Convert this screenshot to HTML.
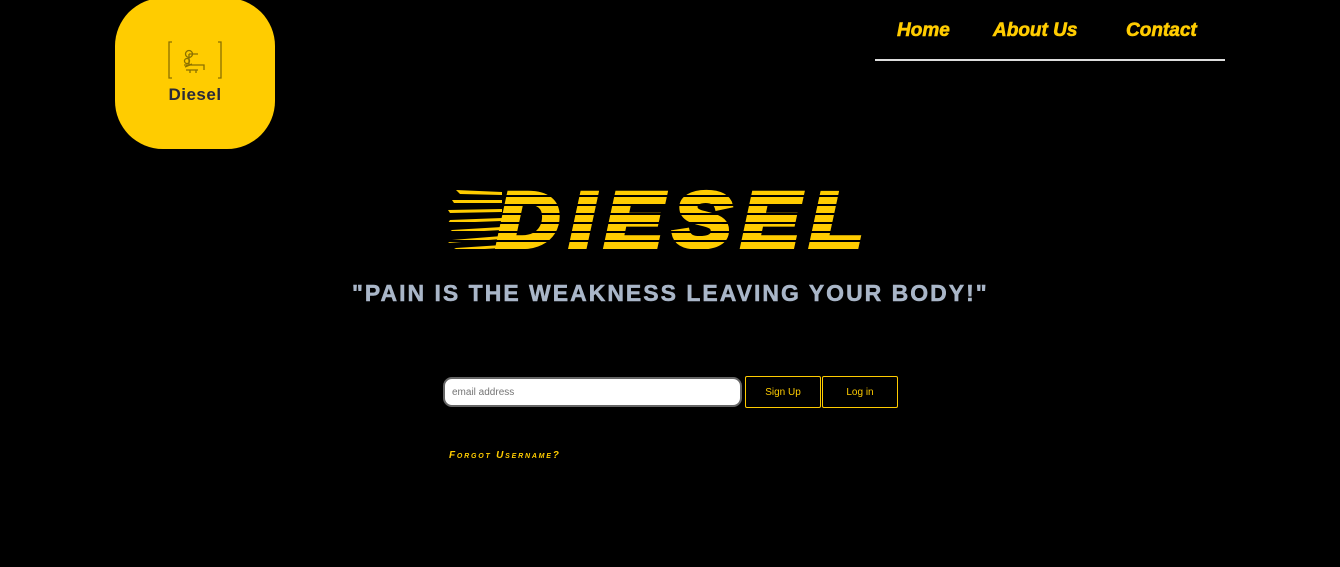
<!DOCTYPE html>
<html><head><style>
body{margin:0;background:#000;width:1340px;height:567px;overflow:hidden;position:relative;font-family:"Liberation Sans",sans-serif}
.logo{position:absolute;left:115px;top:-2px;width:160px;height:151px;background:#ffcc00;border-radius:48px}
.logo .t{position:absolute;left:0;width:160px;top:87px;text-align:center;font-weight:bold;font-size:17px;color:#2a2a3a;letter-spacing:.5px}
nav a{position:absolute;top:20px;color:#ffcc00;font-weight:bold;font-style:italic;font-size:19px;text-decoration:none;font-family:"Liberation Sans",sans-serif;-webkit-text-stroke:0.6px #ffcc00}
.line{position:absolute;left:875px;top:59px;width:350px;height:2px;background:#ddd}
.title{position:absolute;left:497px;top:175px;font-size:86px;font-weight:bold;font-style:italic;color:#ffcc00;letter-spacing:11px;line-height:100px;-webkit-text-stroke:6px #ffcc00;transform:scaleY(0.89);transform-origin:0 13px}
.stripes{position:absolute;left:448px;top:188px;width:430px;height:66px;background:repeating-linear-gradient(to bottom,transparent 0 7px,#000 7px 9px)}
.quote{position:absolute;left:352px;top:279px;white-space:nowrap;font-size:23px;font-weight:bold;color:#a9b6c8;letter-spacing:2px;line-height:28px;-webkit-text-stroke:0.5px #a9b6c8}
input{position:absolute;left:443px;top:377px;width:288px;height:26px;border:2px solid #666;border-radius:9px;padding:0 0 0 7px;font-size:10px;font-family:"Liberation Sans",sans-serif;color:#777;background:#fff;outline:none}
.btn{position:absolute;top:376px;height:30px;border:1px solid #ffcc00;border-radius:2px;color:#ffcc00;font-size:10px;text-align:center;line-height:31px}
.fg{position:absolute;left:449px;top:450px;color:#ffcc00;font-size:10px;font-weight:bold;font-style:italic;letter-spacing:1.8px;font-variant:small-caps}
</style></head><body>
<div class="logo">
<svg style="position:absolute;left:53px;top:42px" width="55" height="40" viewBox="0 0 55 40" fill="none" stroke="#8a7000" stroke-width="1.3">
<path d="M4 2H1V38H4M50 2H53V38H50"/>
<circle cx="21" cy="14" r="3.5"/><circle cx="19" cy="21" r="2.5"/>
<path d="M16 25H36V30M21 14V26M21 14H30M18 30H30M22 30V33M28 30V33M17 27L24 24"/>
</svg>
<div class="t">Diesel</div></div>
<nav><a style="left:897px">Home</a><a style="left:993px">About Us</a><a style="left:1126px">Contact</a></nav>
<div class="line"></div>
<svg style="position:absolute;left:446px;top:188px" width="60" height="66"><g fill="#ffcc00">
<polygon points="10,2 56,4 56,7 14,6"/><polygon points="6,12 56,12 56,15 8,15"/><polygon points="2,22 56,21 56,24 4,25"/><polygon points="4,32 56,30 56,33 2,35"/><polygon points="6,42 56,39 56,42 2,45"/><polygon points="6,52 56,48 56,51 2,55"/><polygon points="10,60 56,57 56,60 4,63"/></g></svg>
<div class="title">DIESEL</div>
<div class="stripes"></div>
<div class="quote">"PAIN IS THE WEAKNESS LEAVING YOUR BODY!"</div>
<input placeholder="email address">
<div class="btn" style="left:745px;width:74px">Sign Up</div>
<div class="btn" style="left:822px;width:74px">Log in</div>
<div class="fg">Forgot Username?</div>
</body></html>
